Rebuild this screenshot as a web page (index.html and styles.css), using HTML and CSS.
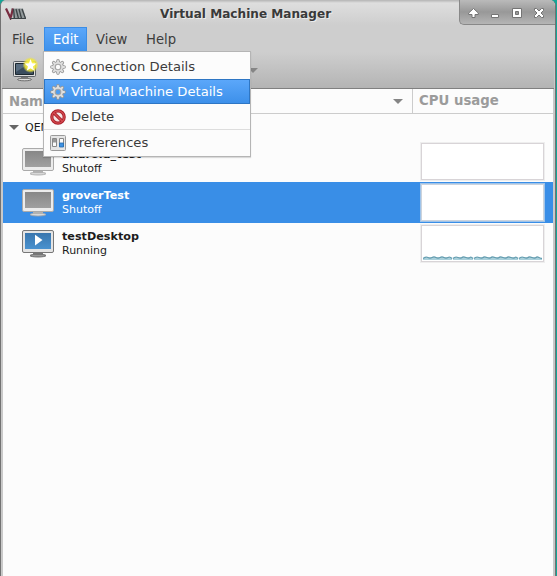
FILE: index.html
```html
<!DOCTYPE html>
<html lang="en">
<head>
<meta charset="utf-8">
<title>Virtual Machine Manager</title>
<link rel="stylesheet" href="styles.css">
</head>
<body>
<svg width="0" height="0" class="defs">
  <defs>
    <linearGradient id="screenOff" x1="0" y1="0" x2="0" y2="1"><stop offset="0" stop-color="#878787"/><stop offset="1" stop-color="#a0a0a0"/></linearGradient>
    <linearGradient id="screenOn" x1="0" y1="0" x2="0" y2="1"><stop offset="0" stop-color="#3976ae"/><stop offset="1" stop-color="#4a92cf"/></linearGradient>
    <symbol id="monitor-off" viewBox="0 0 32 28">
      <ellipse cx="16" cy="25.6" rx="8" ry="1.4" fill="#d8d8d8" stroke="#a5a5a5" stroke-width=".8"/>
      <path d="M11 22h10v3H11z" fill="#b2b2b2"/>
      <rect x=".5" y=".5" width="31" height="22" rx="1.5" fill="#ececec" stroke="#aaa"/>
      <path d="M3 3h26v16H3z" fill="url(#screenOff)"/>
    </symbol>
    <symbol id="monitor-on" viewBox="0 0 32 28">
      <ellipse cx="16" cy="25.6" rx="8" ry="1.4" fill="#999" stroke="#555" stroke-width=".8"/>
      <path d="M11 22h10v3H11z" fill="#777"/>
      <rect x=".5" y=".5" width="31" height="22" rx="1.5" fill="#e4e4e4" stroke="#777"/>
      <path d="M3 3h26v16H3z" fill="url(#screenOn)"/>
      <path d="M13 4.800v10.600l7.500-5.300z" fill="#fff"/>
    </symbol>
    <symbol id="gear" viewBox="0 0 16 16">
      <g stroke="#999" stroke-width="3.600" stroke-linecap="round">
        <path d="M8 1.900v12.200M1.900 8h12.200M3.700 3.700l8.600 8.600M12.300 3.700l-8.600 8.600"/>
      </g>
      <circle cx="8" cy="8" r="5.800" fill="#999"/>
      <g stroke="#e2e2e2" stroke-width="1.800" stroke-linecap="round">
        <path d="M8 1.900v12.200M1.900 8h12.200M3.700 3.700l8.600 8.600M12.300 3.700l-8.600 8.600"/>
      </g>
      <circle cx="8" cy="8" r="5" fill="#dedede"/>
      <circle cx="8" cy="8" r="3.300" fill="#a5a5a5"/>
      <circle cx="8" cy="8" r="2.200" class="hub"/>
    </symbol>
  </defs>
</svg>
<div class="window">
  <header class="titlebar">
    <svg class="logo" width="22" height="13" viewBox="0 0 22 13">
      <path d="M6 1.500h12l3 10H8z" fill="#92999b"/>
      <path d="M1 1.500l4.500 9.500L8 1.500" fill="none" stroke="#782c40" stroke-width="2.200"/>
      <path d="M8.500 2l1 9.500M11 2l2.500 9.500M14 2l2.500 9.500M17 2l3.500 9.500" fill="none" stroke="#3d4346" stroke-width="1.300"/>
      <path d="M5 11.500h16" stroke="#3d4346"/>
    </svg>
    <h1>Virtual Machine Manager</h1>
    <div class="controls">
      <svg width="97" height="25" viewBox="0 0 97 25">
        <g fill="#fff" stroke="#747474" stroke-width="1">
          <path d="M14.500 8.500l4.800 4.500v1.500h-3.300V17.500h-3v-3H9.700V13z"/>
          <path d="M32.500 14.500h7v3h-7z"/>
          <path fill-rule="evenodd" d="M53.500 8.500h9v9h-9zM56.500 11.500v3h3v-3z"/>
          <path d="M75.500 8.500h2l2.500 2.500 2.500-2.500h2v2L82 13l2.500 2.500v2h-2L80 15l-2.500 2.500h-2v-2L78 13l-2.500-2.500z"/>
        </g>
      </svg>
    </div>
  </header>
  <nav class="menubar">
    <span class="m-file">File</span><span class="m-edit">Edit</span><span class="m-view">View</span><span class="m-help">Help</span>
    <div class="menu">
      <div class="item"><svg width="16" height="16"><use href="#gear"/></svg><span>Connection Details</span></div>
      <div class="item active"><svg width="16" height="16"><use href="#gear"/></svg><span>Virtual Machine Details</span></div>
      <div class="item"><svg width="16" height="16" viewBox="0 0 16 16"><circle cx="8" cy="8" r="6.200" fill="#f4e5e5" stroke="#a9202a" stroke-width="3.200"/><path d="M3.800 3.800l8.400 8.400" stroke="#a9202a" stroke-width="3.200"/><circle cx="8" cy="8" r="6.200" fill="none" stroke="#d54b50" stroke-width="1.300"/><path d="M3.800 3.800l8.400 8.400" stroke="#d54b50" stroke-width="1.300"/></svg><span>Delete</span></div>
      <div class="item last"><svg width="16" height="16" viewBox="0 0 16 16"><rect x=".5" y=".5" width="15" height="15" rx="1" fill="#e5e5e5" stroke="#9a9a9a"/><path d="M2.500 3.500h4v8h-4zM9.500 3.500h4v8h-4z" fill="#fafafa" stroke="#888"/><path d="M3 4h3v3.500H3z" fill="#999"/><path d="M9.500 8h4v4h-4z" fill="#3e91e2" stroke="#226bb0" stroke-width=".8"/></svg><span>Preferences</span></div>
    </div>
  </nav>
  <div class="toolbar">
    <svg class="newvm" width="28" height="26" viewBox="0 0 28 26">
      <defs><radialGradient id="glow"><stop offset=".3" stop-color="#fff64a"/><stop offset=".7" stop-color="#f4e936" stop-opacity=".85"/><stop offset="1" stop-color="#f0e638" stop-opacity="0"/></radialGradient></defs>
      <ellipse cx="12.500" cy="22.500" rx="7" ry="1.300" fill="#ddd" stroke="#555" stroke-width=".8"/>
      <path d="M9 19h7v3H9z" fill="#777"/>
      <rect x="1.500" y="4.500" width="22" height="15" rx="1" fill="#ddd" stroke="#5b6066"/>
      <path d="M3.500 6.500h18v11h-18z" fill="#3a4c5e" stroke="#1c2830"/>
      <path d="M4 7h12L4 15z" fill="#596d80"/>
      <circle cx="18.500" cy="8" r="8" fill="url(#glow)"/>
      <path d="M18.500 2l1.500 4.300 4.500.2-3.500 2.900 1.200 4.400-3.700-2.600-3.800 2.600 1.300-4.400-3.500-2.900 4.500-.2z" fill="#fff"/>
    </svg>
    <i class="drop"></i>
  </div>
  <div class="columns">
    <div class="col-name">Name<i class="drop"></i></div>
    <div class="col-cpu">CPU usage</div>
  </div>
  <main>
    <div class="group"><i class="drop"></i><span>QEMU/KVM</span></div>
    <div class="row">
      <svg width="32" height="28"><use href="#monitor-off"/></svg>
      <div class="label"><b>android_test</b><span>Shutoff</span></div>
      <div class="chart"></div>
    </div>
    <div class="row selected">
      <svg width="32" height="28"><use href="#monitor-off"/></svg>
      <div class="label"><b>groverTest</b><span>Shutoff</span></div>
      <div class="chart"></div>
    </div>
    <div class="row">
      <svg width="32" height="28"><use href="#monitor-on"/></svg>
      <div class="label"><b>testDesktop</b><span>Running</span></div>
      <div class="chart"><svg width="119" height="5" viewBox="0 0 119 5">
        <path d="M0 2h29v2H0zM30 2h20v2H30zM51 2h44v2H51zM96 2h23v2H96z" fill="#a9d0db"/>
        <path d="M0 2.500q3-2 5-1t4 0 4 0 4 0 4 0 4 0 4 1M30 2.500q2-2 5-1t4 0 4 0 4 0 3 1M51 2.500q2-2 5-1t4 0 4 0 4 0 4 0 4 0 4 0 4 0 4 0 4 0 3 1M96 2.500q2-2 5-1t4 0 4 0 4 0 3 0 3 1" fill="none" stroke="#649db0" stroke-width="1.300"/>
      </svg></div>
    </div>
  </main>
</div>
</body>
</html>
```
FILE: styles.css
```css
* { box-sizing: border-box; }
body { margin: 0; background: #14a697; font-family: "DejaVu Sans", sans-serif; overflow: hidden; }
svg { display: block; flex: none; }
.defs { position: absolute; }
.window {
  width: 556px; height: 576px; display: flex; flex-direction: column;
  border: solid #727272; border-width: 0 1px; border-radius: 6px 6px 0 0;
  background: #c9c9c9; overflow: hidden;
}
.titlebar {
  height: 27px; display: flex; align-items: flex-start; flex: none;
  background: linear-gradient(#b4b4b4, #dedede 3px, #cecece 25px);
}
.logo { margin: 7px 0 0 4px; }
h1 { margin: 6px 0 0 133px; font-size: 12.1px; line-height: 16px; color: #3a3a3a; white-space: nowrap; text-shadow: 1px 1px #ececec; width: 180px; }
.controls {
  margin-left: auto; width: 96px; height: 25px; border: solid #888; border-width: 0 0 1px 1px;
  border-bottom-left-radius: 5px; background: linear-gradient(#bababa, #989898 50%, #b5b5b5);
}
.controls svg { margin-left: -1px; }
.menubar { height: 25px; flex: none; display: flex; position: relative; font-size: 13.2px; line-height: 25px; color: #3c3c3c; background: #cecece; }
.menubar > span { padding-left: 9px; height: 25px; }
.m-file { width: 41px; margin-left: 2px; }
.m-edit { width: 43px; color: #fff; background: linear-gradient(#5ba7fa, #3d90ea); border: 1px solid #3b8de6; border-bottom: 0; line-height: 24px; }
.menubar > .m-edit { padding-left: 8px; }
.m-view { width: 50px; }
.menu {
  position: absolute; left: 42px; top: 24px; width: 208px; height: 106px; padding-top: 2px;
  border: 1px solid #b5b5b5; background: #fcfcfc; box-shadow: 0 1px 1px #0002; z-index: 2;
}
.item { height: 25px; display: flex; align-items: center; padding-left: 6px; gap: 5px; --hub: #fcfcfc; }
.item.active { color: #fff; background: linear-gradient(#5ba7fa, #3d90ea); border: 1px solid #2e76c4; padding-left: 5px; --hub: #4d9df1; }
.item.last { border-top: 1px solid #ddd; height: 26px; }
.item > span { font-size: 13.15px; }
.hub { fill: var(--hub); }
.toolbar { height: 37px; flex: none; margin: 0 1px; display: flex; background: linear-gradient(#cecece, #b4b4b4); border-bottom: 1px solid #808080; }
.newvm { margin: 5px 0 0 10px; }
.drop { width: 0; height: 0; border: solid transparent; border-width: 5px 5px 0; border-top-color: #858585; flex: none; }
.toolbar .drop { margin: 16px 0 0 208px; }
.columns, main { margin: 0 2px; width: 550px; background: #fcfcfc; }
.columns { height: 25px; flex: none; display: flex; border-bottom: 1px solid #ccc; color: #9b9b9b; font-weight: bold; font-size: 13.3px; line-height: 23px; }
.col-name { width: 410px; padding: 0 9px 0 6px; display: flex; justify-content: space-between; align-items: center; border-right: 1px solid #ccc; }
.col-cpu { padding-left: 6px; }
main { flex: 1; font-size: 11px; color: #1c1c1c; }
.group { height: 27px; display: flex; align-items: center; padding-left: 6px; gap: 6px; }
.group .drop { border-top-color: #666; }
.row { height: 41px; display: flex; padding-left: 19px; }
.row > svg { margin-top: 7px; }
.label { margin: 7px 0 0 8px; line-height: 14px; width: 357px; }
.label b, .label span { display: block; }
.label b { font-size: 11.2px; }
.chart { width: 125px; height: 39px; margin: 1px 0 0 1px; border: 1px solid #eee; outline: 1px solid #d8d4d7; outline-offset: -2px; background: #fff; padding: 31px 2px 0; }
.selected { background: #398ee7; color: #fff; }
.selected .chart { border-color: #9fc4ea; outline-color: #ccd3dc; }
```
